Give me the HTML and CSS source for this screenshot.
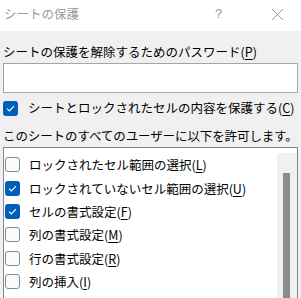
FILE: index.html
```html
<!DOCTYPE html>
<html>

<head>
    <title>シートの保護</title>
    <link rel="stylesheet" href="styles.css">
</head>

<body>
    <!--タイトルバー-->
    <div class="titlebar">
        <div class="title">シートの保護</div>
        <div class="title-help">?</div>
        <div class="title-close">
            <svg width="13" height="13" viewBox="0 0 13 13">
                <path d="M1 1 L12 12 M12 1 L1 12" stroke="#999" stroke-width="1" fill="none"/>
            </svg>
        </div>
    </div>

    <!--本体-->
    <div class="content">
        <div class="line label">シートの保護を解除するためのパスワード(<u>P</u>)</div>
        <input class="password" type="password">

        <div class="line check-row">
            <span class="box checked">
                <svg width="15" height="15" viewBox="0 0 15 15"><path d="M4 7.6 L6.4 10 L11 5.2" stroke="#fff" stroke-width="1.1" fill="none"/></svg>
            </span>
            <span>シートとロックされたセルの内容を保護する(<u>C</u>)</span>
        </div>

        <div class="line allow">このシートのすべてのユーザーに以下を許可します。</div>

        <div class="listbox">
            <div class="item"><span class="box"></span>ロックされたセル範囲の選択(<u>L</u>)</div>
            <div class="item"><span class="box checked"><svg width="15" height="15" viewBox="0 0 15 15"><path d="M4 7.6 L6.4 10 L11 5.2" stroke="#fff" stroke-width="1.1" fill="none"/></svg></span>ロックされていないセル範囲の選択(<u>U</u>)</div>
            <div class="item"><span class="box checked"><svg width="15" height="15" viewBox="0 0 15 15"><path d="M4 7.6 L6.4 10 L11 5.2" stroke="#fff" stroke-width="1.1" fill="none"/></svg></span>セルの書式設定(<u>F</u>)</div>
            <div class="item"><span class="box"></span>列の書式設定(<u>M</u>)</div>
            <div class="item"><span class="box"></span>行の書式設定(<u>R</u>)</div>
            <div class="item"><span class="box"></span>列の挿入(<u>I</u>)</div>

            <!--スクロールバー-->
            <div class="scroll-track"><div class="scroll-thumb"></div></div>
        </div>
    </div>
</body>

</html>
```

FILE: styles.css
```css
  /* 全体 */
  body {
      margin: 0;
      width: 301px;
      height: 298px;
      overflow: hidden;
      background-color: #f0f0f0;
      font-family: "Noto Sans CJK JP", "Noto Sans", sans-serif;
      font-size: 12.5px;
      color: #000;
  }

  u {
      text-underline-offset: 2px;
  }

  /* タイトルバー */
  .titlebar {
      display: flex;
      align-items: center;
      height: 31px;
      background-color: #fff;
      color: #9a9a9a;
      padding-bottom: 4px;
      box-sizing: border-box;
  }

  .title {
      padding-left: 4px;
      font-size: 12.5px;
      flex: 1;
  }

  .title-help {
      width: 8px;
      margin-right: 48px;
      font-family: "Liberation Sans", sans-serif;
      font-size: 13px;
  }

  .title-close {
      width: 13px;
      height: 13px;
      margin-right: 17px;
      margin-top: 2px;
  }

  .title-close svg {
      display: block;
  }

  /* 本体 */
  .content {
      padding: 0 3px;
  }

  .line {
      height: 18px;
      line-height: 18px;
      white-space: nowrap;
  }

  .label {
      margin-top: 12px;
  }

  .password {
      display: block;
      margin-top: 2px;
      width: 295px;
      height: 30px;
      box-sizing: border-box;
      border: 1px solid #a5a5a5;
      background-color: #fff;
      padding: 0;
  }

  .check-row {
      display: flex;
      align-items: center;
      margin-top: 6px;
  }

  .check-row .box {
      margin-right: 10px;
  }

  .allow {
      margin-top: 10px;
      letter-spacing: -0.1px;
  }

  /* チェックボックス */
  .box {
      display: inline-block;
      width: 15px;
      height: 15px;
      box-sizing: border-box;
      border: 1px solid #8a8a8a;
      border-radius: 3px;
      background-color: #fbfbfb;
      flex-shrink: 0;
  }

  .box.checked {
      border: none;
      background-color: #005fb8;
  }

  .box svg {
      display: block;
  }

  /* リストボックス */
  .listbox {
      position: relative;
      margin-top: 2px;
      width: 295px;
      height: 160px;
      box-sizing: border-box;
      border: 1px solid #828790;
      background-color: #fff;
      padding-top: 5px;
      overflow: hidden;
  }

  .item {
      display: flex;
      align-items: center;
      height: 23.4px;
      padding-left: 1px;
      white-space: nowrap;
  }

  .item .box {
      margin-right: 9px;
  }

  .scroll-track {
      position: absolute;
      left: 273px;
      top: 5px;
      width: 20px;
      height: 200px;
      background-color: #f0f0f0;
  }

  .scroll-thumb {
      margin-top: 20px;
      margin-left: 6px;
      width: 7px;
      height: 180px;
      background-color: #8b8b8b;
  }
```
